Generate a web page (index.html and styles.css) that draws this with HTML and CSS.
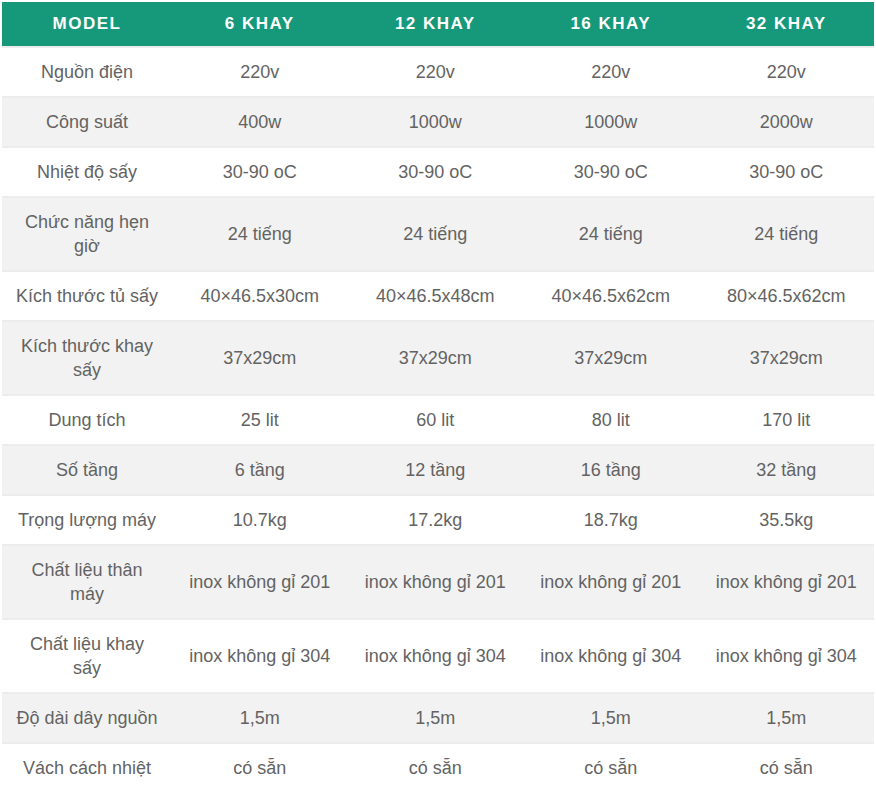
FILE: index.html
```html
<!DOCTYPE html>
<html lang="vi">
<head>
<meta charset="utf-8">
<link rel="stylesheet" href="styles.css">
</head>
<body>
<div class="wrap">
<table class="spec">
  <colgroup>
    <col class="c-first"><col class="c"><col class="c"><col class="c"><col class="c">
  </colgroup>
  <thead>
    <tr><th>MODEL</th><th>6 KHAY</th><th>12 KHAY</th><th>16 KHAY</th><th>32 KHAY</th></tr>
  </thead>
  <tbody>
    <tr><td>Nguồn điện</td><td>220v</td><td>220v</td><td>220v</td><td>220v</td></tr>
    <tr><td>Công suất</td><td>400w</td><td>1000w</td><td>1000w</td><td>2000w</td></tr>
    <tr><td>Nhiệt độ sấy</td><td>30-90 oC</td><td>30-90 oC</td><td>30-90 oC</td><td>30-90 oC</td></tr>
    <tr><td>Chức năng hẹn giờ</td><td>24 tiếng</td><td>24 tiếng</td><td>24 tiếng</td><td>24 tiếng</td></tr>
    <tr><td>Kích thước tủ sấy</td><td>40×46.5x30cm</td><td>40×46.5x48cm</td><td>40×46.5x62cm</td><td>80×46.5x62cm</td></tr>
    <tr><td>Kích thước khay sấy</td><td>37x29cm</td><td>37x29cm</td><td>37x29cm</td><td>37x29cm</td></tr>
    <tr><td>Dung tích</td><td>25 lit</td><td>60 lit</td><td>80 lit</td><td>170 lit</td></tr>
    <tr><td>Số tầng</td><td>6 tầng</td><td>12 tầng</td><td>16 tầng</td><td>32 tầng</td></tr>
    <tr><td>Trọng lượng máy</td><td>10.7kg</td><td>17.2kg</td><td>18.7kg</td><td>35.5kg</td></tr>
    <tr><td>Chất liệu thân máy</td><td>inox không gỉ 201</td><td>inox không gỉ 201</td><td>inox không gỉ 201</td><td>inox không gỉ 201</td></tr>
    <tr><td>Chất liệu khay sấy</td><td>inox không gỉ 304</td><td>inox không gỉ 304</td><td>inox không gỉ 304</td><td>inox không gỉ 304</td></tr>
    <tr><td>Độ dài dây nguồn</td><td>1,5m</td><td>1,5m</td><td>1,5m</td><td>1,5m</td></tr>
    <tr><td>Vách cách nhiệt</td><td>có sẵn</td><td>có sẵn</td><td>có sẵn</td><td>có sẵn</td></tr>
  </tbody>
</table>
</div>
</body>
</html>
```
FILE: styles.css
```css
html, body {
  margin: 0;
  padding: 0;
  background: #fff;
}
body {
  font-family: "Liberation Sans", Arial, sans-serif;
}
.wrap {
  width: 874px;
  padding: 2px 0 0 2px;
  border-right: 2px solid #e6e6e6;
  min-height: 790px;
  box-sizing: content-box;
}
.spec {
  width: 872px;
  border-collapse: collapse;
  table-layout: fixed;
}
.c-first { width: 170px; }
.c { width: 175.5px; }
.spec th {
  background: #16997a;
  color: #fff;
  font-weight: bold;
  font-size: 17px;
  letter-spacing: 1.5px;
  height: 44px;
  padding: 0 8px;
  text-align: center;
  border-bottom: 2px solid #ececec;
}
.spec td {
  color: #636363;
  font-size: 18px;
  line-height: 24px;
  padding: 12px 13px;
  text-align: center;
  border-bottom: 2px solid #ececec;
}
.spec tbody tr:nth-child(even) td {
  background: #f2f2f2;
}
.spec tbody tr:last-child td {
  border-bottom: none;
}
```
